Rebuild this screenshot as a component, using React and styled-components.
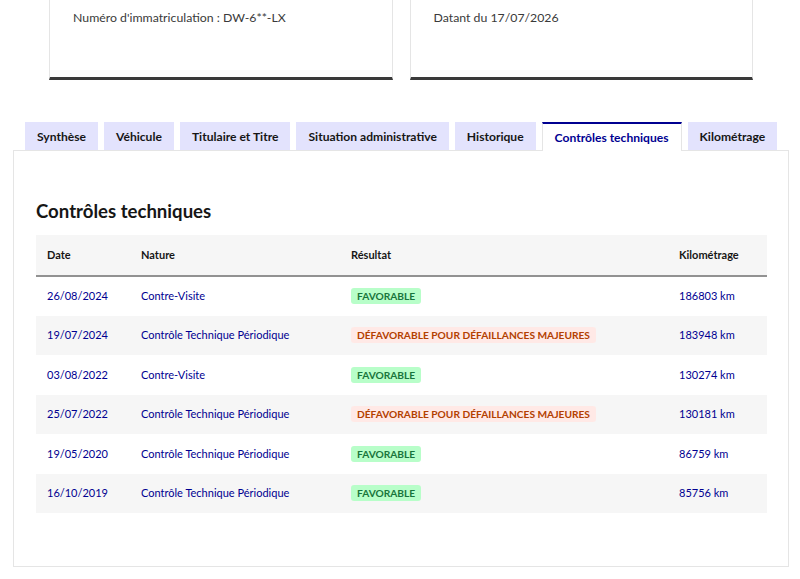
import React from "react";
import styled, { createGlobalStyle } from "styled-components";

const Global = createGlobalStyle`
  body {
    margin: 0;
    background: #fff;
    font-family: Lato, "Noto Sans", sans-serif;
    color: #161616;
  }
`;

const Page = styled.div`
  width: 800px;
`;

const Cards = styled.div`
  display: flex;
  gap: 17px;
  padding: 0 47px 0 49px;
`;

const Card = styled.div`
  flex: 1;
  height: 80px;
  padding: 8px 23px 0;
  box-sizing: border-box;
  border-left: 1px solid #e5e5e5;
  border-right: 1px solid #e5e5e5;
  border-bottom: 3px solid #3a3a3a;
  font-size: 12.3px;
  line-height: 20px;
  color: #3a3a3a;
`;

const Tabs = styled.div`
  display: flex;
  gap: 6px;
  margin-top: 42px;
  padding-left: 25px;
  position: relative;
  z-index: 1;
`;

const Tab = styled.div`
  flex-shrink: 0;
  white-space: nowrap;
  padding: 0 12px;
  display: flex;
  align-items: center;
  box-sizing: border-box;
  font-size: 12.1px;
  font-weight: 700;
  background: ${(p) => (p.$active ? "#fff" : "#e3e3fd")};
  color: ${(p) => (p.$active ? "#000091" : "#161616")};
  border-top: ${(p) => (p.$active ? "2px solid #000091" : "none")};
  border-left: ${(p) => (p.$active ? "1px solid #e5e5e5" : "none")};
  border-right: ${(p) => (p.$active ? "1px solid #e5e5e5" : "none")};
  height: ${(p) => (p.$active ? "29px" : "28px")};
  margin-bottom: ${(p) => (p.$active ? "-1px" : "0")};
  align-self: flex-end;
`;

const Panel = styled.div`
  margin: 0 11px 0 13px;
  border: 1px solid #e5e5e5;
  padding: 48px 21px 53px 22px;
  height: 417px;
  box-sizing: border-box;
`;

const Title = styled.h2`
  margin: 0 0 12px;
  font-size: 18.6px;
  line-height: 24px;
  font-weight: 700;
  color: #161616;
`;

const Table = styled.table`
  width: 100%;
  border-collapse: collapse;
  font-size: 11px;
  line-height: 14px;
`;

const Th = styled.th`
  text-align: left;
  font-weight: 700;
  padding: 0 11px;
  height: 40px;
  background: #f6f6f6;
  border-bottom: 2px solid #929292;
  color: #161616;
`;

const Row = styled.tr`
  height: 39.5px;
  background: ${(p) => (p.$odd ? "#f6f6f6" : "#fff")};
`;

const Td = styled.td`
  padding: 0 11px;
  color: #000091;
`;

const Badge = styled.span`
  display: inline-block;
  padding: 1px 6px;
  border-radius: 3px;
  font-weight: 700;
  font-size: 10.2px;
  line-height: 14px;
  text-transform: uppercase;
  background: ${(p) => (p.$ok ? "#b8fec9" : "#ffe9e6")};
  color: ${(p) => (p.$ok ? "#18753c" : "#b34000")};
`;

const tabs = [
  "Synthèse",
  "Véhicule",
  "Titulaire et Titre",
  "Situation administrative",
  "Historique",
  "Contrôles techniques",
  "Kilométrage",
];

const controles = [
  ["26/08/2024", "Contre-Visite", true, "186803 km"],
  ["19/07/2024", "Contrôle Technique Périodique", false, "183948 km"],
  ["03/08/2022", "Contre-Visite", true, "130274 km"],
  ["25/07/2022", "Contrôle Technique Périodique", false, "130181 km"],
  ["19/05/2020", "Contrôle Technique Périodique", true, "86759 km"],
  ["16/10/2019", "Contrôle Technique Périodique", true, "85756 km"],
];

export default function App() {
  return (
    <Page>
      <Global />
      <Cards>
        <Card>Numéro d'immatriculation : DW-6**-LX</Card>
        <Card>Datant du 17/07/2026</Card>
      </Cards>
      <Tabs>
        {tabs.map((t) => (
          <Tab key={t} $active={t === "Contrôles techniques"}>
            {t}
          </Tab>
        ))}
      </Tabs>
      <Panel>
        <Title>Contrôles techniques</Title>
        <Table>
          <thead>
            <tr>
              <Th style={{ width: 72 }}>Date</Th>
              <Th style={{ width: 188 }}>Nature</Th>
              <Th>Résultat</Th>
              <Th style={{ width: 77 }}>Kilométrage</Th>
            </tr>
          </thead>
          <tbody>
            {controles.map(([date, nature, ok, km], i) => (
              <Row key={date} $odd={i % 2 === 1}>
                <Td>{date}</Td>
                <Td>{nature}</Td>
                <Td>
                  <Badge $ok={ok}>
                    {ok ? "Favorable" : "Défavorable pour défaillances majeures"}
                  </Badge>
                </Td>
                <Td>{km}</Td>
              </Row>
            ))}
          </tbody>
        </Table>
      </Panel>
    </Page>
  );
}
